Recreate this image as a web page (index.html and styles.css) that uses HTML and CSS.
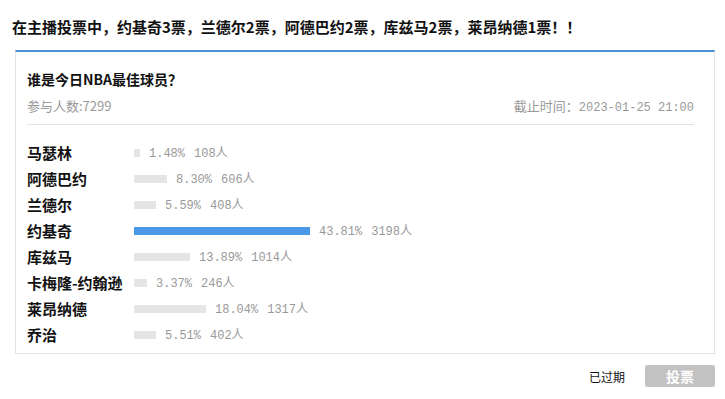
FILE: index.html
```html
<!DOCTYPE html>
<html>
<head>
    <link rel="stylesheet" href="styles.css">
</head>
<body>
    <h1 class="headline">在主播投票中，约基奇3票，兰德尔2票，阿德巴约2票，库兹马2票，莱昂纳德1票！！</h1>

    <div class="vote-card">
        <h2 class="vote-title">谁是今日NBA最佳球员？</h2>
        <div class="vote-info">
            <span class="vote-count">参与人数:7299</span>
            <span class="vote-deadline">截止时间：<span class="mono">2023-01-25 21:00</span></span>
        </div>

        <div class="vote-list">
            <div class="vote-row">
                <div class="vote-name">马瑟林</div>
                <div class="vote-bar" style="width: 6px"></div>
                <div class="vote-stat"><span>1.48%</span><span>108人</span></div>
            </div>
            <div class="vote-row">
                <div class="vote-name">阿德巴约</div>
                <div class="vote-bar" style="width: 33px"></div>
                <div class="vote-stat"><span>8.30%</span><span>606人</span></div>
            </div>
            <div class="vote-row">
                <div class="vote-name">兰德尔</div>
                <div class="vote-bar" style="width: 22px"></div>
                <div class="vote-stat"><span>5.59%</span><span>408人</span></div>
            </div>
            <div class="vote-row">
                <div class="vote-name">约基奇</div>
                <div class="vote-bar top" style="width: 176px"></div>
                <div class="vote-stat"><span>43.81%</span><span>3198人</span></div>
            </div>
            <div class="vote-row">
                <div class="vote-name">库兹马</div>
                <div class="vote-bar" style="width: 56px"></div>
                <div class="vote-stat"><span>13.89%</span><span>1014人</span></div>
            </div>
            <div class="vote-row">
                <div class="vote-name">卡梅隆-约翰逊</div>
                <div class="vote-bar" style="width: 13px"></div>
                <div class="vote-stat"><span>3.37%</span><span>246人</span></div>
            </div>
            <div class="vote-row">
                <div class="vote-name">莱昂纳德</div>
                <div class="vote-bar" style="width: 72px"></div>
                <div class="vote-stat"><span>18.04%</span><span>1317人</span></div>
            </div>
            <div class="vote-row">
                <div class="vote-name">乔治</div>
                <div class="vote-bar" style="width: 22px"></div>
                <div class="vote-stat"><span>5.51%</span><span>402人</span></div>
            </div>
        </div>
    </div>

    <div class="vote-footer">
        <span class="expired">已过期</span>
        <button class="vote-button" disabled>投票</button>
    </div>
</body>
</html>
```

FILE: styles.css
```css
body {
    margin: 0;
    font-family: "Noto Sans CJK SC", sans-serif;
    color: #000;
    background-color: #fff;
}

.headline {
    margin: 0;
    padding: 17px 0 0 12px;
    height: 33px;
    font-size: 15px;
    line-height: 20px;
    font-weight: bold;
    color: #111;
}

.vote-card {
    margin: 0 10px 0 15px;
    border: 1px solid #e2e2e2;
    border-top: 2px solid #4a90d9;
    padding: 17px 20px 5px 11px;
}

.vote-title {
    margin: 0;
    font-size: 14px;
    line-height: 20px;
    font-weight: bold;
    color: #111;
}

.vote-info {
    display: flex;
    justify-content: space-between;
    margin-top: 7px;
    padding-bottom: 6px;
    border-bottom: 1px solid #e2e2e2;
    font-size: 13px;
    line-height: 20px;
    color: #999;
}

.mono {
    font-family: "Liberation Mono", "Noto Sans CJK SC", monospace;
    font-size: 12px;
}

.vote-list {
    padding-top: 15px;
}

.vote-row {
    display: flex;
    align-items: center;
    height: 26px;
}

.vote-name {
    width: 107px;
    font-size: 15px;
    line-height: 20px;
    font-weight: bold;
    color: #111;
    white-space: nowrap;
}

.vote-bar {
    height: 8px;
    background-color: #e5e5e5;
}

.vote-bar.top {
    background-color: #4a98e8;
}

.vote-stat {
    display: flex;
    align-items: center;
    gap: 9px;
    margin-left: 9px;
    font-family: "Liberation Mono", "Noto Sans CJK SC", monospace;
    font-size: 12px;
    line-height: 16px;
    color: #999;
}

.vote-stat span {
    display: block;
    height: 16px;
    padding-top: 1px;
}

.vote-footer {
    display: flex;
    justify-content: flex-end;
    align-items: center;
    gap: 20px;
    margin: 11px 10px 0 0;
}

.expired {
    font-size: 12px;
    color: #111;
}

.vote-button {
    width: 70px;
    height: 22px;
    border: none;
    border-radius: 3px;
    background-color: #c2c2c2;
    color: #fff;
    font-family: "Noto Sans CJK SC", sans-serif;
    font-size: 14px;
    font-weight: bold;
    padding: 0;
}
```
